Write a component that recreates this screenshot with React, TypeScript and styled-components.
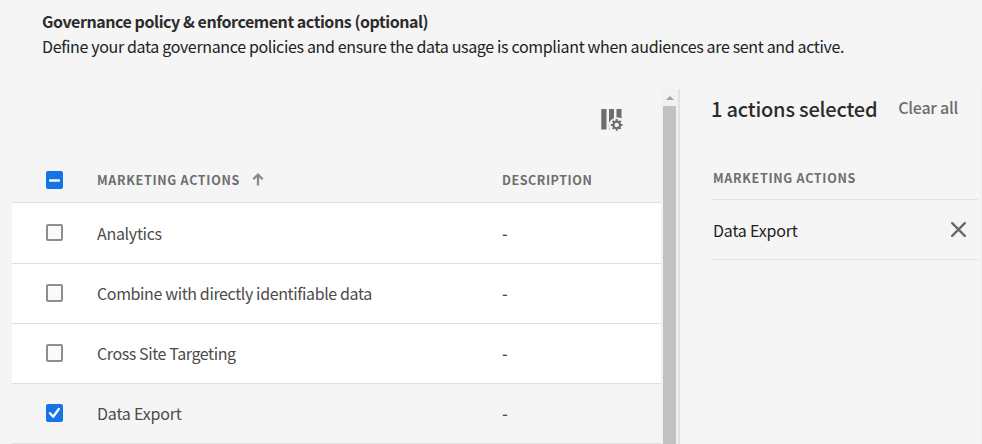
import React from 'react';
import styled, { createGlobalStyle } from 'styled-components';

const GlobalStyle = createGlobalStyle`
  * { box-sizing: border-box; }
  html, body { margin: 0; padding: 0; overflow: hidden; background: #f5f5f5; }
  body { font-family: "Noto Sans CJK SC", "Noto Sans", sans-serif; font-size: 16px; }
`;

const Page = styled.main`
  display: grid;
  grid-template-rows: 89px 355px;
  width: 982px;
  height: 444px;
  overflow: hidden;
  background: #f5f5f5;
`;

const Intro = styled.header`
  padding: 9px 0 0 42px;
  white-space: nowrap;
`;

const Title = styled.h1`
  margin: 0;
  font-size: 16px;
  line-height: 25px;
  font-weight: 700;
  letter-spacing: -0.45px;
  color: #2c2c2c;
`;

const Subtitle = styled.p`
  margin: 0;
  font-size: 16px;
  line-height: 25px;
  letter-spacing: -0.345px;
  color: #222;
`;

const Body = styled.div`
  display: flex;
  padding-left: 12px;
`;

const TableArea = styled.section`
  width: 649px;
  overflow: hidden;
`;

const Toolbar = styled.div`
  display: flex;
  justify-content: flex-end;
  height: 69px;
  padding: 20px 38px 0 0;
`;

const columns = '85px 405px 1fr';

const HeadRow = styled.div`
  display: grid;
  grid-template-columns: ${columns};
  align-items: center;
  height: 45px;
  padding-bottom: 1px;
  border-bottom: 1px solid #e0e0e0;
`;

const HeadLabel = styled.span<{ $spacing?: number }>`
  font-size: 12.5px;
  line-height: 19px;
  font-weight: 700;
  letter-spacing: ${(p) => p.$spacing ?? 0.7}px;
  color: #6e6e6e;
  white-space: nowrap;
`;

const SortCell = styled.div`
  display: flex;
  align-items: center;
  gap: 12px;
`;

const Row = styled.div<{ $selected?: boolean; $tall?: boolean }>`
  display: grid;
  grid-template-columns: ${columns};
  align-items: center;
  height: ${(p) => (p.$tall ? 61 : 60)}px;
  padding-bottom: ${(p) => (p.$tall ? 1 : 2)}px;
  border-bottom: 1px solid #e0e0e0;
  background: ${(p) => (p.$selected ? '#f5f5f5' : '#fff')};
`;

const CellText = styled.span<{ $spacing?: number }>`
  padding-top: 2px;
  font-size: 16px;
  line-height: 25px;
  letter-spacing: ${(p) => p.$spacing ?? 0}px;
  color: #4b4b4b;
  white-space: nowrap;
`;

const EmptyValue = styled(CellText)`
  font-weight: 500;
`;

const CheckBox = styled.span<{ $filled?: boolean; $short?: boolean }>`
  display: grid;
  place-items: center;
  width: 17px;
  height: ${(p) => (p.$short ? 17 : 18)}px;
  margin-top: ${(p) => (p.$short ? 0 : 1)}px;
  margin-left: 34px;
  border: ${(p) => (p.$filled ? '0' : '2px solid #8e8e8e')};
  border-radius: 2px;
  background: ${(p) => (p.$filled ? '#1473e6' : '#fafafa')};
`;

const ScrollBar = styled.div`
  display: flex;
  flex-direction: column;
  align-items: center;
  width: 17px;
  background: #f1f1f1;
`;

const ScrollButton = styled.div`
  display: grid;
  place-items: center;
  height: 17px;
`;

const Thumb = styled.div`
  flex: 1;
  width: 13px;
  background: #c1c1c1;
`;

const Panel = styled.aside`
  width: 304px;
  padding: 0 3px 0 31px;
  border-left: 2px solid #e1e1e1;
  border-right: 1px solid #eeeeee;
`;

const PanelHead = styled.div`
  display: flex;
  align-items: flex-start;
  justify-content: space-between;
  height: 80px;
  padding: 6px 20px 0 0;
  white-space: nowrap;
`;

const PanelTitle = styled.h2`
  margin: 0;
  font-size: 20px;
  line-height: 28px;
  font-weight: 500;
  letter-spacing: -0.2px;
  color: #2c2c2c;
`;

const ClearButton = styled.button`
  padding: 0;
  border: 0;
  background: none;
  font: 500 16px/24px "Noto Sans CJK SC", "Noto Sans", sans-serif;
  letter-spacing: -0.25px;
  color: #6e6e6e;
`;

const PanelLabelRow = styled.div`
  display: flex;
  align-items: flex-start;
  height: 31px;
  margin-left: 2px;
  border-bottom: 1px solid #e0e0e0;
`;

const PanelLabel = styled(HeadLabel)`
  line-height: 17px;
`;

const SelectedRow = styled.div`
  display: flex;
  align-items: center;
  justify-content: space-between;
  height: 60px;
  margin-left: 2px;
  padding-right: 12px;
  border-bottom: 1px solid #e0e0e0;
`;

const SelectedText = styled(CellText)`
  padding-top: 1px;
  color: #1f1f1f;
`;

const ColumnSettingsIcon = () => (
  <svg width="22" height="22" viewBox="0 0 22 22">
    <path d="M0.3 0h5.2v20.5H0.3zM8 0h5v9.2A7.6 7.6 0 0 0 8.8 20.5H8zM15.5 0h5v9.6a7.4 7.4 0 0 0-5-1z" fill="#6e6e6e" />
    <g transform="translate(15.7 15.9)" stroke="#6e6e6e" fill="none">
      <circle r="3.3" strokeWidth="2.2" />
      <path d="M0-3.6V-5.8M0 3.6V5.8M3.6 0H5.8M-3.6 0H-5.8M2.6-2.6L4-4M-2.6-2.6L-4-4M2.6 2.6L4 4M-2.6 2.6L-4 4" strokeWidth="2" />
    </g>
  </svg>
);

const SortArrow = () => (
  <svg width="12" height="13" viewBox="0 0 12 13" fill="none" stroke="#8a8a8a" strokeWidth="2.3">
    <path d="M6 12.4V2M1.3 6.2L6 1.5l4.7 4.7" strokeLinejoin="round" />
  </svg>
);

const Dash = () => (
  <svg width="11" height="3" viewBox="0 0 11 3">
    <rect width="11" height="2.6" y=".2" rx="1" fill="#fff" />
  </svg>
);

const Check = () => (
  <svg width="13" height="12" viewBox="0 0 13 12" fill="none">
    <path d="M2 6.2l3.2 3.5L10.8 2" stroke="#fff" strokeWidth="2.3" strokeLinecap="round" strokeLinejoin="round" />
  </svg>
);

const Cross = () => (
  <svg width="15" height="15" viewBox="0 0 15 15" stroke="#6a6a6a" strokeWidth="2.4" strokeLinecap="round">
    <path d="M1.2 1.2l12.6 12.6M13.8 1.2L1.2 13.8" />
  </svg>
);

const rows = [
  { name: 'Analytics', selected: false, spacing: -0.3 },
  { name: 'Combine with directly identifiable data', selected: false, spacing: -0.38 },
  { name: 'Cross Site Targeting', selected: false, spacing: -0.4 },
  { name: 'Data Export', selected: true, spacing: -0.2 },
];

export default function App() {
  return (
    <>
      <GlobalStyle />
      <Page>
        <Intro>
          <Title>Governance policy &amp; enforcement actions (optional)</Title>
          <Subtitle>
            Define your data governance policies and ensure the data usage is compliant when audiences are sent and active.
          </Subtitle>
        </Intro>
        <Body>
          <TableArea>
            <Toolbar>
              <ColumnSettingsIcon />
            </Toolbar>
            <HeadRow>
              <CheckBox $filled>
                <Dash />
              </CheckBox>
              <SortCell>
                <HeadLabel>MARKETING ACTIONS</HeadLabel>
                <SortArrow />
              </SortCell>
              <HeadLabel $spacing={0.55}>DESCRIPTION</HeadLabel>
            </HeadRow>
            {rows.map((row, index) => (
              <Row key={row.name} $selected={row.selected} $tall={index === 0}>
                <CheckBox $filled={row.selected} $short={index === 0}>
                  {row.selected && <Check />}
                </CheckBox>
                <CellText $spacing={row.spacing}>{row.name}</CellText>
                <EmptyValue>-</EmptyValue>
              </Row>
            ))}
          </TableArea>
          <ScrollBar>
            <ScrollButton>
              <svg width="8" height="4" viewBox="0 0 8 4">
                <path d="M0 4L4 0l4 4z" fill="#a3a3a3" />
              </svg>
            </ScrollButton>
            <Thumb />
          </ScrollBar>
          <Panel>
            <PanelHead>
              <PanelTitle>1 actions selected</PanelTitle>
              <ClearButton>Clear all</ClearButton>
            </PanelHead>
            <PanelLabelRow>
              <PanelLabel>MARKETING ACTIONS</PanelLabel>
            </PanelLabelRow>
            <SelectedRow>
              <SelectedText $spacing={-0.2}>Data Export</SelectedText>
              <Cross />
            </SelectedRow>
          </Panel>
        </Body>
      </Page>
    </>
  );
}
